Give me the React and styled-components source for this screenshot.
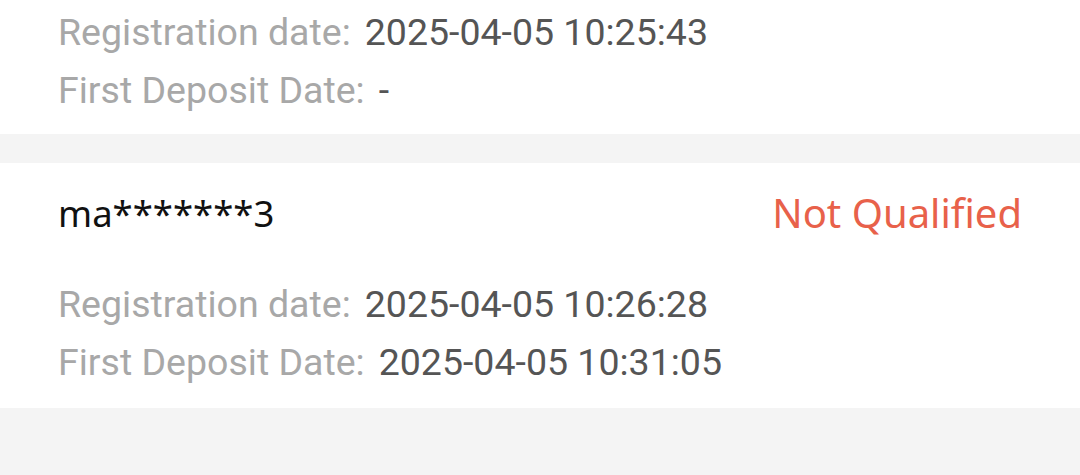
import React from "react";
import styled, { createGlobalStyle } from "styled-components";

const GlobalStyle = createGlobalStyle`
  html, body {
    margin: 0;
    padding: 0;
    background: #f4f4f4;
  }
  body {
    font-family: Roboto, "Noto Sans", sans-serif;
  }
`;

const records = [
  {
    id: 1,
    registered: "2025-04-05 10:25:43",
    firstDeposit: "-",
  },
  {
    id: 2,
    user: "ma*******3",
    status: "Not Qualified",
    registered: "2025-04-05 10:26:28",
    firstDeposit: "2025-04-05 10:31:05",
  },
];

const App = () => {
  return (
    <>
      <GlobalStyle />
      <List>
        {records.map((r) => (
          <Card key={r.id} $partial={!r.user}>
            {r.user && (
              <Header>
                <User>{r.user}</User>
                <Status>{r.status}</Status>
              </Header>
            )}
            <Row>
              <Label>Registration date:</Label>
              <Value>{r.registered}</Value>
            </Row>
            <Row>
              <Label>First Deposit Date:</Label>
              <Value>{r.firstDeposit}</Value>
            </Row>
          </Card>
        ))}
      </List>
    </>
  );
};

const List = styled.div`
  display: flex;
  flex-direction: column;
  gap: 29px;
  min-height: 475px;
`;

const Card = styled.div`
  background: #ffffff;
  padding: ${(p) => (p.$partial ? "3px 58px 15px" : "0 58px 17px")};
`;

const Header = styled.div`
  display: flex;
  align-items: center;
  justify-content: space-between;
  height: 100px;
  margin-bottom: 12px;
`;

const User = styled.span`
  font-family: "Noto Sans", sans-serif;
  font-size: 36.5px;
  color: #111;
`;

const Status = styled.span`
  font-family: "Noto Sans", sans-serif;
  font-size: 40px;
  color: #e8614a;
  margin-top: -2px;
`;

const Row = styled.div`
  display: flex;
  align-items: center;
  gap: 14px;
  height: 58px;
  font-size: 37.5px;
`;

const Label = styled.span`
  color: #a8a8a8;
`;

const Value = styled.span`
  color: #555555;
`;

export default App;
